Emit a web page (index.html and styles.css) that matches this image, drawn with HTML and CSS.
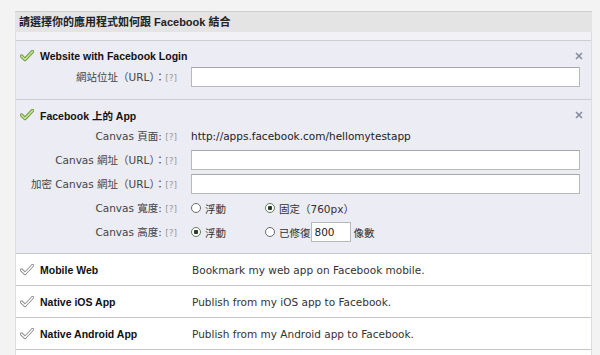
FILE: index.html
```html
<!DOCTYPE html>
<html lang="zh-Hant">
<head>
    <meta charset="UTF-8">
    <title>應用程式設定</title>
    <link rel="stylesheet" href="styles.css">
</head>
<body>
    <div class="panel">
        <div class="panel-head">請選擇你的應用程式如何跟 Facebook 結合</div>
        <div class="panel-body">

            <!-- Website with Facebook Login -->
            <div class="section">
                <div class="sec-title">
                    <svg class="check" width="14" height="12" viewBox="0 0 14 12"><polyline points="1.5,6 5,9.5 12.5,1.5" fill="none" stroke="#6f9a3a" stroke-width="3.4" stroke-linejoin="round" stroke-linecap="round"/><polyline points="1.5,6 5,9.5 12.5,1.5" fill="none" stroke="#c6e59a" stroke-width="1.6" stroke-linejoin="round" stroke-linecap="round"/></svg>
                    <span class="title-text">Website with Facebook Login</span>
                    <svg class="close" width="8" height="8" viewBox="0 0 8 8"><path d="M1 1L7 7M7 1L1 7" stroke="#868b9c" stroke-width="1.6"/></svg>
                </div>
                <div class="form">
                    <label class="lbl">網站位址（URL）：<span class="help">[?]</span></label>
                    <input type="text" class="field">
                </div>
            </div>

            <!-- Facebook 上的 App -->
            <div class="section">
                <div class="sec-title">
                    <svg class="check" width="14" height="12" viewBox="0 0 14 12"><polyline points="1.5,6 5,9.5 12.5,1.5" fill="none" stroke="#6f9a3a" stroke-width="3.4" stroke-linejoin="round" stroke-linecap="round"/><polyline points="1.5,6 5,9.5 12.5,1.5" fill="none" stroke="#c6e59a" stroke-width="1.6" stroke-linejoin="round" stroke-linecap="round"/></svg>
                    <span class="title-text">Facebook 上的 App</span>
                    <svg class="close" width="8" height="8" viewBox="0 0 8 8"><path d="M1 1L7 7M7 1L1 7" stroke="#868b9c" stroke-width="1.6"/></svg>
                </div>
                <div class="form">
                    <label class="lbl">Canvas 頁面: <span class="help">[?]</span></label>
                    <span class="value">http://apps.facebook.com/hellomytestapp</span>

                    <label class="lbl">Canvas 網址（URL）：<span class="help">[?]</span></label>
                    <input type="text" class="field">

                    <label class="lbl">加密 Canvas 網址（URL）：<span class="help">[?]</span></label>
                    <input type="text" class="field">

                    <label class="lbl">Canvas 寬度: <span class="help">[?]</span></label>
                    <div class="choices">
                        <label class="choice"><input type="radio" name="w" class="radio">浮動</label>
                        <label class="choice"><input type="radio" name="w" class="radio" checked>固定（760px）</label>
                    </div>

                    <label class="lbl">Canvas 高度: <span class="help">[?]</span></label>
                    <div class="choices">
                        <label class="choice"><input type="radio" name="h" class="radio" checked>浮動</label>
                        <label class="choice"><input type="radio" name="h" class="radio">已修復<input type="text" class="small-field" value="800">像數</label>
                    </div>
                </div>
            </div>

            <!-- other platforms -->
            <div class="option-row">
                <div class="opt-name">
                    <svg class="check" width="14" height="12" viewBox="0 0 14 12"><polyline points="1.5,6 5,9.5 12.5,1.5" fill="none" stroke="#8c8c8c" stroke-width="3.2" stroke-linejoin="round" stroke-linecap="round"/><polyline points="1.5,6 5,9.5 12.5,1.5" fill="none" stroke="#ffffff" stroke-width="1.4" stroke-linejoin="round" stroke-linecap="round"/></svg>
                    <span class="title-text">Mobile Web</span>
                </div>
                <div class="opt-desc">Bookmark my web app on Facebook mobile.</div>
            </div>
            <div class="option-row">
                <div class="opt-name">
                    <svg class="check" width="14" height="12" viewBox="0 0 14 12"><polyline points="1.5,6 5,9.5 12.5,1.5" fill="none" stroke="#8c8c8c" stroke-width="3.2" stroke-linejoin="round" stroke-linecap="round"/><polyline points="1.5,6 5,9.5 12.5,1.5" fill="none" stroke="#ffffff" stroke-width="1.4" stroke-linejoin="round" stroke-linecap="round"/></svg>
                    <span class="title-text">Native iOS App</span>
                </div>
                <div class="opt-desc">Publish from my iOS app to Facebook.</div>
            </div>
            <div class="option-row">
                <div class="opt-name">
                    <svg class="check" width="14" height="12" viewBox="0 0 14 12"><polyline points="1.5,6 5,9.5 12.5,1.5" fill="none" stroke="#8c8c8c" stroke-width="3.2" stroke-linejoin="round" stroke-linecap="round"/><polyline points="1.5,6 5,9.5 12.5,1.5" fill="none" stroke="#ffffff" stroke-width="1.4" stroke-linejoin="round" stroke-linecap="round"/></svg>
                    <span class="title-text">Native Android App</span>
                </div>
                <div class="opt-desc">Publish from my Android app to Facebook.</div>
            </div>
            <div class="option-row"></div>
        </div>
    </div>
</body>
</html>
```

FILE: styles.css
```css
/* Página */
body {
    margin: 0;
    background-color: #f3f3f3;
    font-family: "DejaVu Sans", "Noto Sans CJK TC", sans-serif;
    font-size: 10.5px;
    color: #333;
}

.panel {
    margin: 11px 0 0 15px;
    width: 577px;
}

/* Encabezado gris */
.panel-head {
    height: 20px;
    line-height: 20px;
    padding-left: 4px;
    background-color: #e4e4e4;
    border-top: 1px solid #cfcfcf;
    font-family: "Liberation Sans", "Noto Sans CJK TC", sans-serif;
    font-size: 11px;
    font-weight: bold;
    color: #222;
}

.panel-body {
    background-color: #f1f1f6;
    padding-top: 8px;
    border-left: 1px solid #dcdce2;
    border-right: 1px solid #dcdce2;
}

/* Secciones activas */
.section {
    background-color: #ececf4;
    border-top: 1px solid #cdcdd6;
    padding: 8px 11px 11px 0;
}

.section:first-child {
    padding-bottom: 12px;
}

.sec-title {
    display: flex;
    align-items: center;
    height: 14px;
    padding-left: 4px;
    margin-bottom: 4px;
}

.check {
    flex: none;
    margin-right: 6px;
}

.title-text {
    font-family: "Liberation Sans", "Noto Sans CJK TC", sans-serif;
    font-size: 10.5px;
    font-weight: bold;
    color: #111;
}

.close {
    margin-left: auto;
    margin-right: -3px;
}

/* Formulario */
.form {
    display: grid;
    grid-template-columns: 161px 1fr;
    grid-auto-rows: 20px;
    column-gap: 14px;
    row-gap: 4px;
    align-items: center;
}

.lbl {
    text-align: right;
    color: #444;
    white-space: nowrap;
    line-height: 20px;
    height: 20px;
}

.help {
    color: #999;
    font-size: 9px;
}

.value {
    line-height: 20px;
    color: #222;
}

.field {
    box-sizing: border-box;
    height: 20px;
    width: 100%;
    margin: 0;
    border: 1px solid #b9b9b9;
    border-top-color: #a8a8a8;
    background: #fff;
}

.choices {
    display: flex;
    align-items: center;
    height: 20px;
}

.choice {
    display: flex;
    align-items: center;
    white-space: nowrap;
    color: #333;
}

.choice:first-child {
    width: 74px;
}

.radio {
    appearance: none;
    flex: none;
    box-sizing: border-box;
    width: 10px;
    height: 10px;
    margin: 0 4px 0 0;
    border: 1px solid #6a6a6a;
    border-radius: 50%;
    background: #fff;
}

.radio:checked {
    border-color: #5f7f5a;
    background: radial-gradient(circle, #2b3a2b 0 2px, #fff 2.5px);
}

.small-field {
    flex: none;
    box-sizing: border-box;
    width: 40px;
    height: 20px;
    margin: 0 3px 0 0;
    padding: 0 3px;
    border: 1px solid #b9b9b9;
    font: inherit;
    color: #222;
}

/* Filas de plataformas */
.option-row {
    display: grid;
    grid-template-columns: 176px 1fr;
    height: 31px;
    align-items: center;
    background-color: #fff;
    border-top: 1px solid #c6c6c6;
}

.opt-name {
    display: flex;
    align-items: center;
    padding-left: 4px;
}

.opt-desc {
    color: #333;
}
```
